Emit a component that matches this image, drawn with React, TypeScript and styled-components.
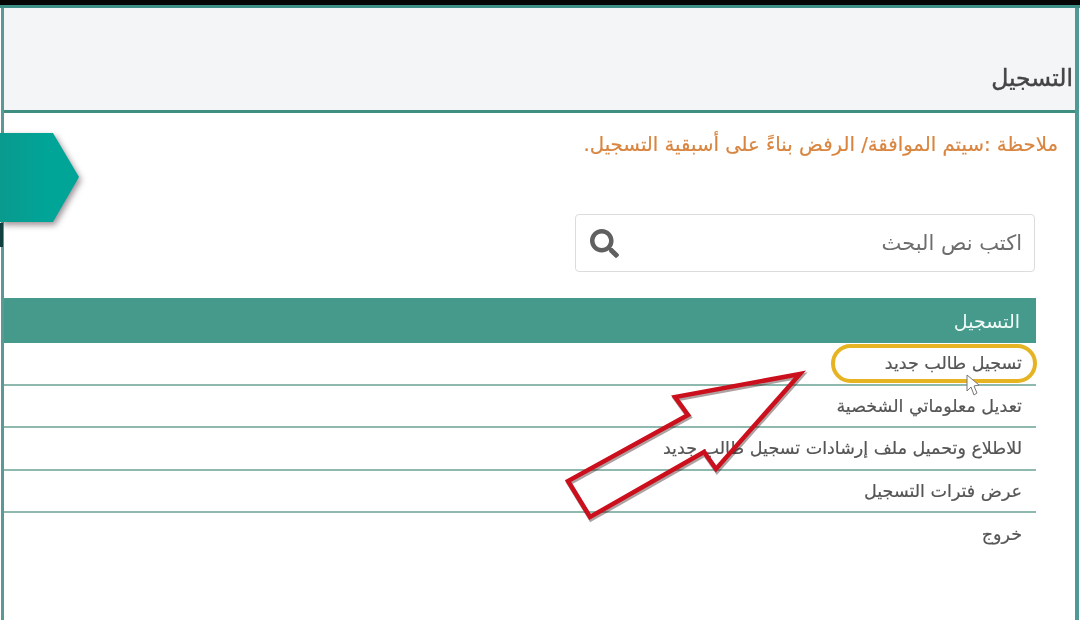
import React from 'react';
import styled, { createGlobalStyle } from 'styled-components';
import { FaSearch } from 'react-icons/fa';

const GlobalStyle = createGlobalStyle`
  html, body {
    margin: 0;
    padding: 0;
    background: #ffffff;
  }
`;

const Screen = styled.div`
  position: relative;
  width: 1080px;
  height: 620px;
  overflow: hidden;
  background: #ffffff;
  font-family: 'DejaVu Sans', 'Noto Sans', sans-serif;
  filter: blur(0.4px);
`;

const TopBar = styled.div`
  height: 5px;
  background: #050505;
  border-bottom: 3px solid #3f8f86;
`;

const Frame = styled.div`
  direction: rtl;
  height: 612px;
  margin: 0 1px;
  border-left: 3px solid #5a9a96;
  border-right: 4px solid #4f9a96;
`;

const PageHeader = styled.header`
  box-sizing: border-box;
  height: 105px;
  background: #f4f5f6;
  border-bottom: 3px solid #3f8f80;
  display: flex;
  align-items: flex-end;
  padding: 0 2px 15px 0;
`;

const PageTitle = styled.h1`
  margin: 0;
  font-size: 23.5px;
  font-weight: 400;
  line-height: 34px;
  color: #444444;
  -webkit-text-stroke: 0.4px #444444;
`;

const Note = styled.p`
  margin: 16px 17px 0 0;
  font-size: 19.7px;
  line-height: 32px;
  color: #d9853f;
  -webkit-text-stroke: 0.2px #d9853f;
`;

const SearchBox = styled.div`
  display: flex;
  align-items: center;
  justify-content: space-between;
  box-sizing: border-box;
  width: 460px;
  height: 58px;
  margin: 53px 40px 0 0;
  padding: 0 12px 0 14px;
  background: #ffffff;
  border: 1px solid #dcdcdc;
  border-radius: 4px;
`;

const SearchText = styled.span`
  font-size: 21px;
  color: #6d6d6d;
`;

const SearchIcon = styled(FaSearch)`
  width: 29px;
  height: 29px;
  color: #606060;
`;

const Table = styled.div`
  margin: 26px 39px 0 0;
`;

const TableHead = styled.div`
  height: 45px;
  display: flex;
  align-items: center;
  padding-right: 16px;
  background: #459a8c;
  color: #f2fbf8;
  font-size: 19px;
`;

const Row = styled.div<{ $last?: boolean }>`
  box-sizing: border-box;
  height: 42.5px;
  display: flex;
  align-items: center;
  padding-right: 14px;
  font-size: 17.5px;
  color: #555555;
  -webkit-text-stroke: 0.2px #555555;
  border-bottom: ${({ $last }) => ($last ? 'none' : '2px solid #8fb8ae')};
`;

const SideTab = styled.div`
  position: absolute;
  left: 0;
  top: 133px;
  filter: drop-shadow(2px 3px 3px rgba(70, 50, 60, 0.55));
`;

const SideTabShape = styled.div`
  width: 79px;
  height: 89px;
  background: linear-gradient(90deg, #0a9a8e, #00a598 60%);
  clip-path: polygon(0 0, 53px 0, 79px 44px, 53px 89px, 0 89px);
`;

const SideNotch = styled.div`
  position: absolute;
  left: 0;
  top: 223px;
  width: 3px;
  height: 24px;
  background: #0f3f3e;
`;

const Highlight = styled.div`
  position: absolute;
  left: 831px;
  top: 344px;
  width: 206px;
  height: 39px;
  box-sizing: border-box;
  border: 4px solid #e6b422;
  border-radius: 20px;
`;

const Overlay = styled.svg`
  position: absolute;
  left: 0;
  top: 0;
  width: 1080px;
  height: 620px;
  pointer-events: none;
`;

const rows = [
  'تسجيل طالب جديد',
  'تعديل معلوماتي الشخصية',
  'للاطلاع وتحميل ملف إرشادات تسجيل طالب جديد',
  'عرض فترات التسجيل',
  'خروج',
];

const arrowPoints = '800,374 675,397 688,415 568,481 590,517 704,452 716,469';

const App: React.FC = () => {
  return (
    <Screen>
      <GlobalStyle />
      <TopBar />
      <Frame>
        <PageHeader>
          <PageTitle>التسجيل</PageTitle>
        </PageHeader>
        <Note>ملاحظة :سيتم الموافقة/ الرفض بناءً على أسبقية التسجيل.</Note>
        <SearchBox>
          <SearchText>اكتب نص البحث</SearchText>
          <SearchIcon />
        </SearchBox>
        <Table>
          <TableHead>التسجيل</TableHead>
          {rows.map((label, i) => (
            <Row key={label} $last={i === rows.length - 1}>
              {label}
            </Row>
          ))}
        </Table>
      </Frame>
      <SideTab>
        <SideTabShape />
      </SideTab>
      <SideNotch />
      <Highlight />
      <Overlay viewBox="0 0 1080 620">
        <polygon points={arrowPoints} fill="none" stroke="rgba(50,20,20,0.4)" strokeWidth="5" transform="translate(1 2)" />
        <polygon points={arrowPoints} fill="none" stroke="#cc0f1c" strokeWidth="4.5" strokeLinejoin="miter" />
        <path d="M967 375 L967 391 L971 387 L974 395 L977 393 L974 386 L979 385 Z" fill="#ffffff" stroke="#777" strokeWidth="1" />
      </Overlay>
    </Screen>
  );
};

export default App;
